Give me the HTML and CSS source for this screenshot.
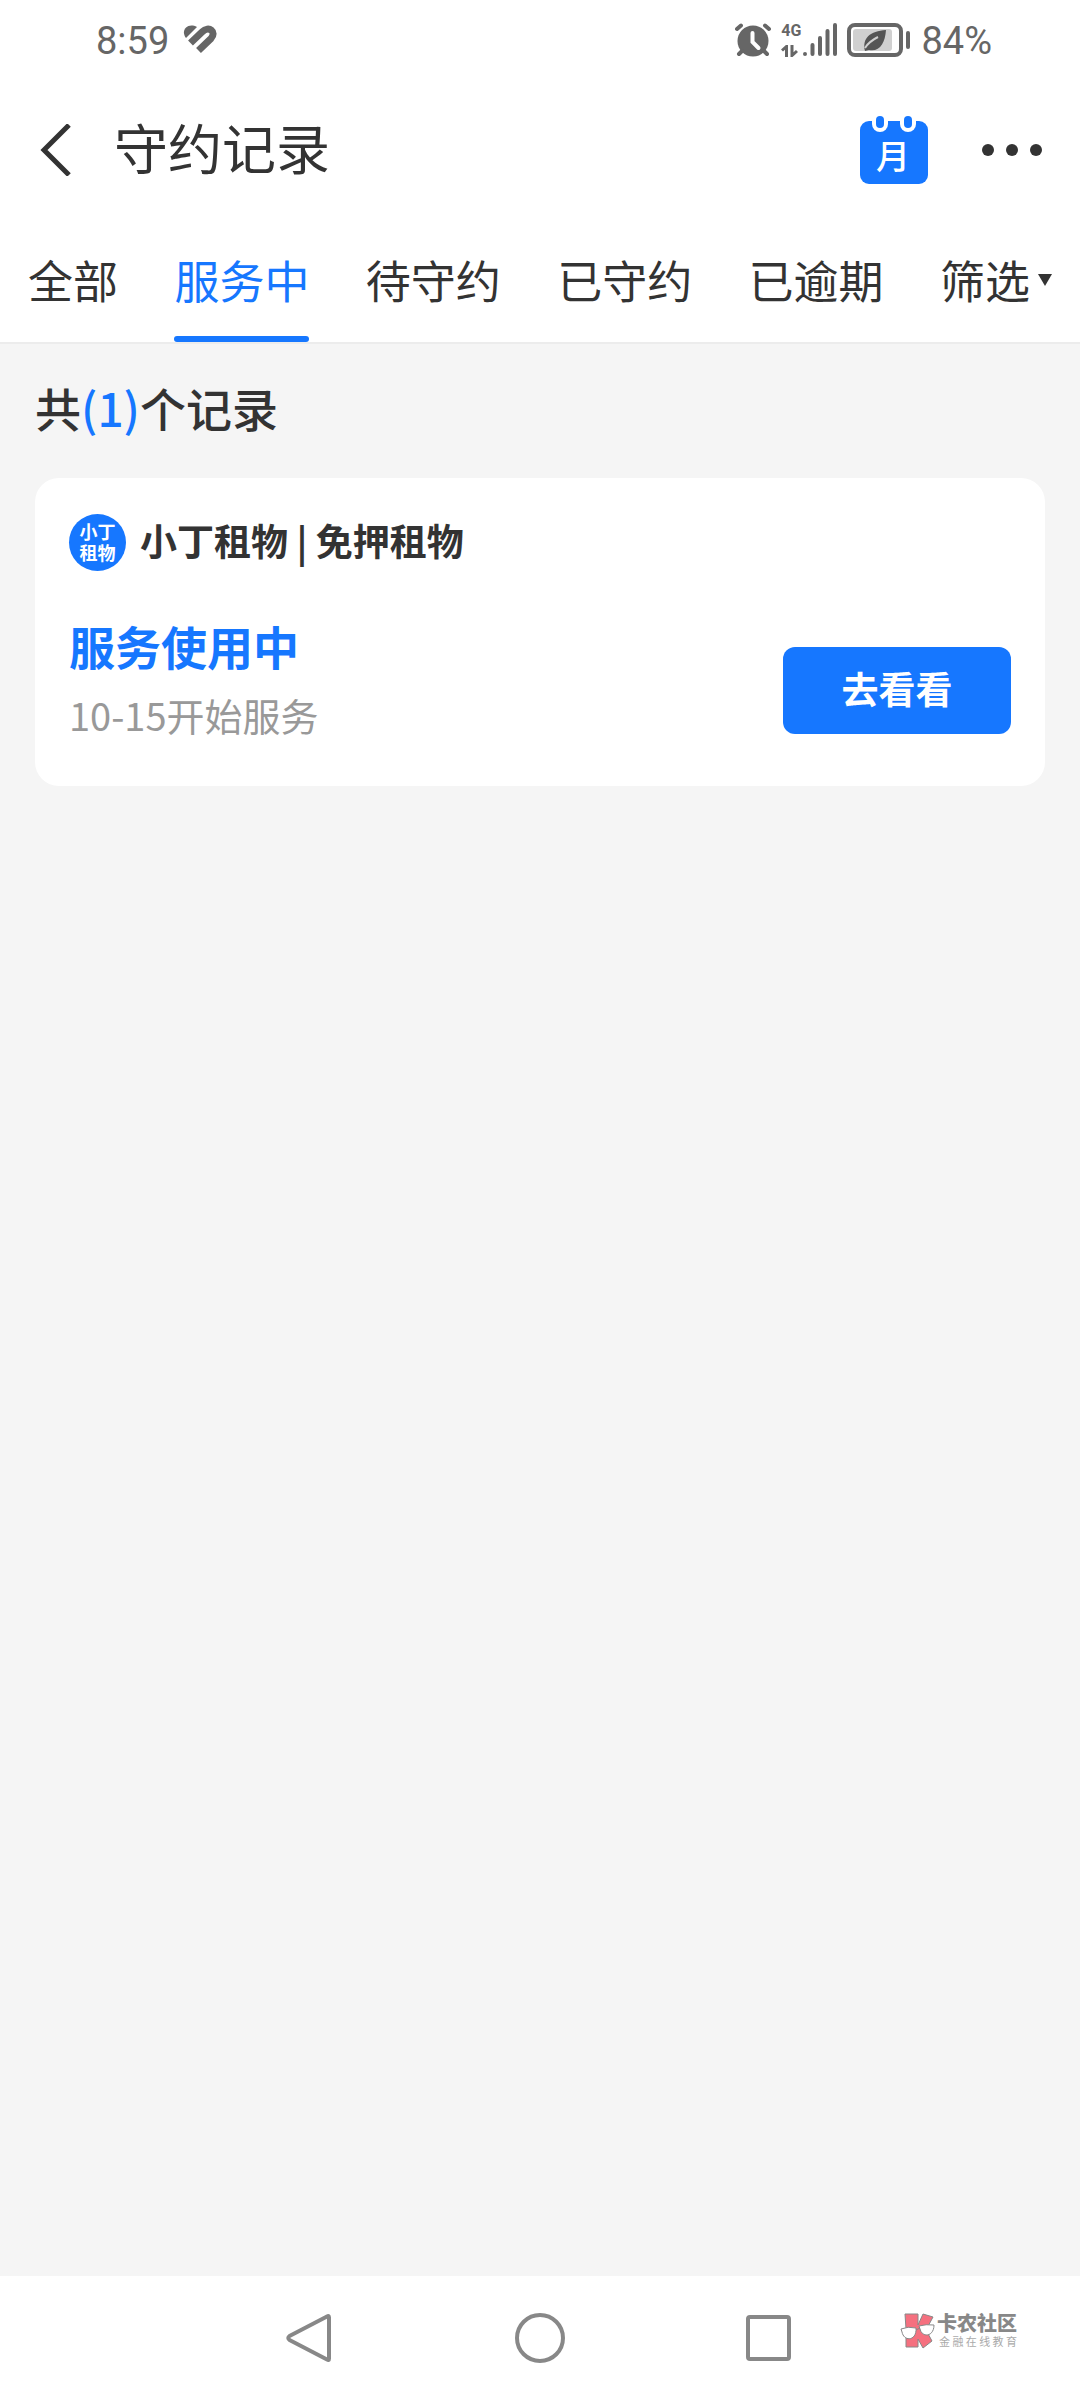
FILE: index.html
```html
<!DOCTYPE html>
<html lang="zh-CN">
<head>
    <meta charset="UTF-8">
    <meta name="viewport" content="width=device-width, initial-scale=1.0">
    <title>守约记录</title>
    <link rel="stylesheet" href="styles.css">
</head>
<body>
    <div class="status-bar">
        <div class="status-left">
            <span class="time">8:59</span>
            <svg width="34" height="30" viewBox="0 0 34 30" fill="none" stroke="#666" stroke-width="7">
                <path d="M3 13C-3 5 5 -3 14 2Z" fill="#666" stroke="none"/>
                <path d="M7.500 18L19 7C26 0 34 7 28 13.500L15.500 25.500"/>
            </svg>
        </div>
        <div class="status-right">
            <svg width="36" height="34" viewBox="0 0 36 34" fill="none" stroke="#666" stroke-width="4" stroke-linecap="round">
                <circle cx="18" cy="18" r="15.500" fill="#666" stroke="none"/>
                <path d="M2 6L6 2.500M34 6L30 2.500M7 28L4 31M29 28L32 31"/>
                <path d="M17.500 10V19L23.500 25" stroke="#fff"/>
            </svg>
            <div class="signal">
                <div class="network">
                    <span>4G</span>
                    <svg width="18" height="12" viewBox="0 0 18 12" fill="none" stroke="#666" stroke-width="3">
                        <path d="M1 5.500L5.500 1.500V12M11 0V10.500L16 6"/>
                    </svg>
                </div>
                <svg width="34" height="34" viewBox="0 0 34 34" stroke="#666" stroke-width="4" stroke-linecap="round">
                    <path d="M2 31V31.100M9.500 31V22M17 31V15M24.500 31V8M32 31V2"/>
                </svg>
            </div>
            <svg width="64" height="34" viewBox="0 0 64 34" fill="none">
                <rect x="2" y="2" width="52" height="30" rx="6" stroke="#666" stroke-width="4"/>
                <rect x="6" y="6" width="39" height="22" rx="3" fill="#d0d0d0"/>
                <path d="M18 28C15 15 23 8 39 7C38 20 33 29 22 27Z" fill="#555"/>
                <path d="M18 25C21 20 25 17 31 14" stroke="#d0d0d0" stroke-width="2"/>
                <rect x="59" y="8" width="4" height="18" rx="2" fill="#666"/>
            </svg>
            <span class="battery-level">84%</span>
        </div>
    </div>

    <header class="header">
        <button class="icon-button" aria-label="返回">
            <svg width="32" height="52" viewBox="0 0 32 52" fill="none" stroke="#333" stroke-width="5">
                <path d="M29 1L4 26L29 51"/>
            </svg>
        </button>
        <h1>守约记录</h1>
        <button class="icon-button calendar" aria-label="月历">
            <svg width="68" height="68" viewBox="0 0 68 68">
                <rect y="5" width="68" height="63" rx="9" fill="#1677ff"/>
                <rect x="12" y="-4" width="16" height="20" rx="8" fill="#fff"/>
                <rect x="40" y="-4" width="16" height="20" rx="8" fill="#fff"/>
                <rect x="16" y="0" width="8" height="12" rx="4" fill="#1677ff"/>
                <rect x="44" y="0" width="8" height="12" rx="4" fill="#1677ff"/>
                <text class="calendar-text" x="33" y="53" text-anchor="middle">月</text>
            </svg>
        </button>
        <button class="icon-button" aria-label="更多">
            <svg width="60" height="12" viewBox="0 0 60 12" fill="#333">
                <circle cx="6" cy="6" r="6"/>
                <circle cx="30" cy="6" r="6"/>
                <circle cx="54" cy="6" r="6"/>
            </svg>
        </button>
    </header>

    <nav class="tabs">
        <button class="tab">全部</button>
        <button class="tab active">服务中</button>
        <button class="tab">待守约</button>
        <button class="tab">已守约</button>
        <button class="tab">已逾期</button>
        <button class="tab">筛选
            <svg width="14" height="12" viewBox="0 0 14 12" fill="#333"><path d="M0 0H14L7 12Z"/></svg>
        </button>
    </nav>

    <main class="content">
        <h2 class="count">共<span>(1)</span>个记录</h2>
        <article class="card">
            <div class="merchant">
                <div class="merchant-logo">
                    <span>小丁</span>
                    <span>租物</span>
                </div>
                <h3>小丁租物 | 免押租物</h3>
            </div>
            <div class="record">
                <div>
                    <p class="record-status">服务使用中</p>
                    <p class="record-date">10-15开始服务</p>
                </div>
                <button class="view-button">去看看</button>
            </div>
        </article>
    </main>

    <footer class="nav-bar">
        <button class="icon-button" aria-label="后退">
            <svg width="50" height="50" viewBox="0 0 50 50" fill="none" stroke="#888" stroke-width="4" stroke-linejoin="round">
                <path d="M42 3.500Q44 2 44 4.500V45.500Q44 48 42 46.500L4.500 27Q2 25 4.500 23Z"/>
            </svg>
        </button>
        <button class="icon-button" aria-label="主屏幕">
            <svg width="50" height="50" viewBox="0 0 50 50" fill="none" stroke="#888" stroke-width="4">
                <circle cx="25" cy="25" r="23"/>
            </svg>
        </button>
        <button class="icon-button" aria-label="最近任务">
            <svg width="50" height="50" viewBox="0 0 50 50" fill="none" stroke="#888" stroke-width="4">
                <rect x="3" y="4" width="41" height="42" rx="2"/>
            </svg>
        </button>
        <div class="watermark">
            <svg width="35" height="36" viewBox="0 0 35 36" stroke="#888" stroke-width="1">
                <path d="M5 1H18V12L23 1L33 4L26 17L32 28L23 35L18 26V34H6V16Z" fill="#f5707f"/>
                <path d="M1 16Q8 13 16 15C17 28 4 29 2 19ZM19 13Q26 11 34 12C34 24 22 25 20 16ZM16 17L20 15" fill="#fff"/>
            </svg>
            <div class="watermark-text">
                <strong>卡农社区</strong>
                <span>金融在线教育</span>
            </div>
        </div>
    </footer>
</body>
</html>
```

FILE: styles.css
```css
* {
    box-sizing: border-box;
}
body {
    margin: 0;
    min-height: 100vh;
    display: flex;
    flex-direction: column;
    background-color: #f5f5f5;
    color: #333;
    font-family: "Noto Sans CJK SC", sans-serif;
}
h1, h2, h3, p {
    margin: 0;
}
button {
    padding: 0;
    border: none;
    background: none;
    color: inherit;
    font-family: inherit;
    cursor: pointer;
}
svg {
    display: block;
    flex: none;
}

/* Status bar */
.status-bar {
    display: flex;
    justify-content: space-between;
    align-items: center;
    height: 80px;
    padding: 0 88px 0 96px;
    background-color: white;
    color: #666;
    font-family: Roboto, sans-serif;
    font-size: 38px;
    line-height: 40px;
}
.time, .battery-level {
    padding-top: 2px;
}
.status-left {
    display: flex;
    align-items: center;
    gap: 14px;
}
.status-right {
    display: flex;
    align-items: center;
    gap: 10px;
}
.signal {
    display: flex;
    gap: 2px;
}
.network {
    display: flex;
    flex-direction: column;
    justify-content: space-between;
    font-size: 16px;
    font-weight: 700;
    line-height: 16px;
}

/* Header */
.header {
    display: flex;
    align-items: center;
    height: 140px;
    padding: 0 38px 0 40px;
    background-color: white;
}
.header h1 {
    flex: 1;
    margin-left: 42px;
    padding-bottom: 6px;
    font-size: 54px;
    font-weight: 400;
    line-height: 80px;
}
.calendar {
    margin-right: 54px;
}
.calendar-text {
    fill: white;
    font-size: 34px;
    font-weight: 500;
}

/* Tabs */
.tabs {
    display: flex;
    justify-content: space-between;
    padding: 0 28px;
    background-color: white;
    border-bottom: 2px solid #ececec;
}
.tab {
    display: flex;
    align-items: center;
    gap: 8px;
    height: 122px;
    padding-bottom: 2px;
    font-size: 45px;
    line-height: 60px;
    white-space: nowrap;
}
.tab.active {
    position: relative;
    color: #1677ff;
}
.tab.active::after {
    content: "";
    position: absolute;
    left: 0;
    right: 0;
    bottom: 0;
    height: 6px;
    border-radius: 3px;
    background-color: #1677ff;
}

/* Records */
.content {
    flex: 1;
    padding: 0 35px;
}
.count {
    padding: 30px 0 38px;
    font-size: 46px;
    font-weight: 500;
    line-height: 66px;
}
.count span {
    color: #1677ff;
}
.card {
    padding: 36px 34px 52px;
    border-radius: 24px;
    background-color: white;
}
.merchant {
    display: flex;
    align-items: center;
    gap: 14px;
}
.merchant h3 {
    padding-bottom: 6px;
    font-size: 37px;
    font-weight: 700;
    line-height: 50px;
}
.merchant-logo {
    display: flex;
    flex-direction: column;
    align-items: center;
    justify-content: center;
    width: 57px;
    height: 57px;
    padding-bottom: 2px;
    border-radius: 50%;
    background-color: #1677ff;
    color: white;
    font-size: 18px;
    font-weight: 700;
    line-height: 21px;
}
.record {
    display: flex;
    justify-content: space-between;
    align-items: flex-end;
    margin-top: 44px;
}
.record-status {
    color: #1677ff;
    font-size: 46px;
    font-weight: 700;
    line-height: 60px;
}
.record-date {
    margin-top: 21px;
    color: #999;
    font-size: 38px;
    line-height: 38px;
}
.view-button {
    width: 228px;
    height: 87px;
    padding-bottom: 6px;
    border-radius: 12px;
    background-color: #1677ff;
    color: white;
    font-size: 37px;
    font-weight: 700;
}

/* System navigation */
.nav-bar {
    position: relative;
    display: flex;
    justify-content: center;
    align-items: center;
    gap: 180px;
    height: 124px;
    background-color: white;
}
.watermark {
    position: absolute;
    right: 63px;
    top: 37px;
    display: flex;
    gap: 2px;
    color: #888;
}
.watermark-text {
    display: flex;
    flex-direction: column;
    width: 80px;
}
.watermark strong {
    font-size: 20px;
    font-weight: 900;
    line-height: 20px;
}
.watermark span {
    padding-left: 2px;
    color: #aaa;
    font-size: 11px;
    line-height: 16px;
    text-align-last: justify;
    text-justify: inter-character;
}
```
